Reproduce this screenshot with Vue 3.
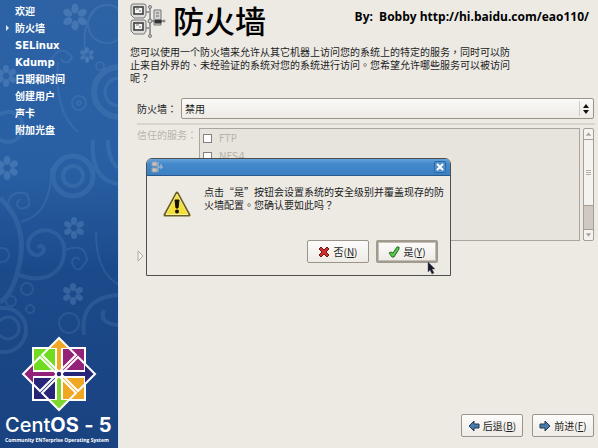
<script setup>
import { ref } from 'vue'

const steps = ['欢迎', '防火墙', 'SELinux', 'Kdump', '日期和时间', '创建用户', '声卡', '附加光盘']
const current = '防火墙'
const firewall = ref('disabled')
const services = ['FTP', 'NFS4']

const petals = [0, 60, 120, 180, 240, 300]
const flowers = [
  { x: 75, y: 17, s: 1.2 },
  { x: 87, y: 55, s: 0.7 },
  { x: 6, y: 76, s: 1 },
  { x: 7, y: 168, s: 1.1 },
  { x: 74, y: 228, s: 1 },
  { x: 73, y: 294, s: 1 },
]
const logoParts = [
  { angle: 0, arrow: '#efa724', square: '#932279' },
  { angle: 90, arrow: '#262577', square: '#efa724' },
  { angle: 180, arrow: '#80d62d', square: '#262577' },
  { angle: 270, arrow: '#932279', square: '#70dc1e' },
]
</script>

<template>
  <div class="screen">
    <aside class="sidebar">
      <svg class="pattern" viewBox="0 0 118 448" preserveAspectRatio="xMidYMin slice" aria-hidden="true">
        <g class="curl">
          <circle cx="107" cy="24" r="19" />
          <path d="M88 62Q78 30 96 8M50 62q10-20 22-5q-5 10-11 2M58 62q-4 50 20 70" />
          <circle cx="79" cy="103" r="7" />
          <circle cx="79" cy="103" r="2" />
          <circle cx="100" cy="66" r="4" />
          <circle cx="73" cy="176" r="20" stroke-width="5" />
          <circle cx="73" cy="176" r="10" stroke-width="4" />
          <circle cx="119" cy="92" r="25" stroke-width="6" />
          <circle cx="119" cy="92" r="14" stroke-width="3" />
          <path d="M118 184Q90 180 93 140M118 168q-10-8-10-28" stroke-width="4" />
          <path d="M51 168q1 46-30 54M8 203q3-14 19-9q7 16-8 14q-5-5 2-9" />
          <path d="M0 198Q30 226 18 270Q12 295 0 302" stroke-width="5" />
          <path d="M19 275C50 286 66 268 64 247C60 226 36 226 29 240C24 256 42 260 44 249Q41 243 38 248" stroke-width="4" />
          <path d="M65 250q20-8 22 10q-10 18-15 2q2-8 8-2M96 232q0 40 22 52" />
          <circle cx="2" cy="255" r="7" />
          <circle cx="27" cy="289" r="6" />
          <circle cx="11" cy="301" r="5" />
          <circle cx="30" cy="309" r="4" />
          <circle cx="4" cy="330" r="22" stroke-width="4" />
          <circle cx="8" cy="328" r="11" stroke-width="3" />
          <circle cx="69" cy="323" r="10" />
          <path d="M84 335q-5-37 34-40M118 325q-20-2-14-15" stroke-width="4" />
          <circle cx="8" cy="127" r="15" stroke-width="4" />
        </g>
        <g v-for="f in flowers" :key="f.y" class="flower" :transform="`translate(${f.x} ${f.y}) scale(${f.s})`">
          <ellipse v-for="a in petals" :key="a" cx="0" cy="-7" rx="3" ry="4" :transform="`rotate(${a})`" />
        </g>
      </svg>

      <nav>
        <ol class="steps">
          <li v-for="step in steps" :key="step" :class="{ current: step === current }">{{ step }}</li>
        </ol>
      </nav>

      <div class="brand">
        <svg class="logo" viewBox="-38 -38 76 76" aria-hidden="true">
          <g v-for="p in logoParts" :key="p.angle" :transform="`rotate(${p.angle})`" stroke="#fff" stroke-width="2">
            <rect x="3" y="-26" width="23" height="23" :fill="p.square" />
          </g>
          <g v-for="p in logoParts" :key="p.angle" :transform="`rotate(${p.angle})`">
            <path d="M0-36L10-26H-10ZM-2-26H2V-3H-2Z" :fill="p.arrow" />
            <path d="M0-36L17-19L0-2L-17-19Z" fill="none" stroke="#fff" stroke-width="2" />
          </g>
          <circle r="3" fill="#262577" stroke="#fff" stroke-width="1.5" />
        </svg>
        <div class="brand-name">Cent<b>OS</b> <b>-</b> <b>5</b></div>
        <div class="tagline">Community ENTerprise Operating System</div>
      </div>
    </aside>

    <main class="page">
      <header class="head">
        <svg class="net-icon" viewBox="0 0 36 36" aria-hidden="true">
          <g stroke="#77777a">
            <path d="M15 9h5M15 25h5M20 4v29M20 18h14" fill="none" stroke="#9b9b9b" stroke-width="2" />
            <path d="M1 3q0-2 2-2h11q2 0 2 2v9l-2 3H4l-3-3Z" fill="#dedddc" />
            <path d="M1 19q0-2 2-2h11q2 0 2 2v9l-2 3H4l-3-3Z" fill="#dedddc" />
            <path d="M4 4h9v7H4ZM4 20h9v7H4Z" fill="#f4f4f2" stroke="#333" stroke-width="1.5" />
            <path d="M6 6h3M9 8h2M6 22h3M9 24h2" stroke="#777" />
            <path d="M24 7h7v15h-7Z" fill="#d4d4d3" />
            <path d="M25 17h6v3h-6Z" fill="#333" stroke="#333" />
            <path d="M26 10h3M26 13h3" stroke="#666" />
            <g fill="#ccc"><circle cx="20" cy="4" r="1.5" /><circle cx="20" cy="18" r="2" /><circle cx="20" cy="33" r="1.5" /><circle cx="34" cy="18" r="1" /></g>
          </g>
        </svg>
        <h1>防火墙</h1>
        <p class="credit">By:&nbsp; Bobby http://hi.baidu.com/eao110/</p>
      </header>

      <p class="intro">您可以使用一个防火墙来允许从其它机器上访问您的系统上的特定的服务，同时可以防<br />止来自外界的、未经验证的系统对您的系统进行访问。您希望允许哪些服务可以被访问<br />呢？</p>

      <div class="form">
        <div class="field">
          <label for="firewall">防火墙：</label>
          <div class="combo">
            <select id="firewall" v-model="firewall">
              <option value="enabled">启用</option>
              <option value="disabled">禁用</option>
            </select>
            <svg class="combo-arrows" viewBox="0 0 6 10" aria-hidden="true"><path d="M3 0L6 4H0ZM3 10L0 6H6Z" /></svg>
          </div>
        </div>
        <hr />
        <div class="trusted">
          <span class="trusted-label" id="trusted">信任的服务：</span>
          <div class="list" role="group" aria-labelledby="trusted">
            <label v-for="s in services" :key="s"><input type="checkbox" disabled />{{ s }}</label>
          </div>
          <div class="scrollbar" aria-hidden="true">
            <svg class="step" viewBox="0 0 10 10"><path d="M5 3L8 7H2Z" /></svg>
            <div class="thumb"><i></i><i></i><i></i></div>
            <div class="trough"></div>
            <svg class="step" viewBox="0 0 10 10"><path d="M5 7L2 3H8Z" /></svg>
          </div>
        </div>
        <svg class="expander" viewBox="0 0 7 12" aria-hidden="true"><path d="M1 1L6 6L1 11Z" /></svg>
      </div>

      <footer class="actions">
        <button type="button">
          <svg viewBox="0 0 12 12" aria-hidden="true"><path d="M1 6L6 1V4H11V8H6V11Z" fill="#477cac" stroke="#23364c" /></svg>
          <span>后退(<u>B</u>)</span>
        </button>
        <button type="button">
          <svg viewBox="0 0 12 12" aria-hidden="true"><path d="M11 6L6 1V4H1V8H6V11Z" fill="#477cac" stroke="#23364c" /></svg>
          <span>前进(<u>F</u>)</span>
        </button>
      </footer>
    </main>

    <section class="dialog" role="alertdialog" aria-labelledby="question">
      <div class="titlebar">
        <svg class="mini" viewBox="0 0 13 12" aria-hidden="true"><path d="M1 1h5v4H1ZM1 7h5v4H1Z" fill="#c9c5be" stroke="#929ba8" /><path d="M7 1v10M7 6h5M10 3v5" fill="none" stroke="#b8bfc9" /></svg>
        <button type="button" class="close" aria-label="关闭">
          <svg viewBox="0 0 8 8" aria-hidden="true"><path d="M1 1L7 7M7 1L1 7" /></svg>
        </button>
      </div>
      <div class="dialog-body">
        <svg class="warning" viewBox="0 0 28 26" aria-hidden="true">
          <path d="M14 2L26 24H2Z" fill="#f2dc35" stroke="#6a5f1d" stroke-width="3" stroke-linejoin="round" />
          <path d="M14 3L25 23.500H3Z" fill="#f4de38" stroke="#fbf2a0" stroke-linejoin="round" />
          <path d="M12 9h4l-1 8h-2Z" fill="#111" stroke="#111" stroke-linejoin="round" />
          <circle cx="14" cy="20.500" r="2" fill="#111" />
        </svg>
        <p id="question">点击“是”按钮会设置系统的安全级别并覆盖现存的防<br />火墙配置。您确认要如此吗？</p>
      </div>
      <div class="dialog-actions">
        <button type="button">
          <svg viewBox="0 0 12 12" aria-hidden="true"><path d="M3 1L6 4L9 1L11 3L8 6L11 9L9 11L6 8L3 11L1 9L4 6L1 3Z" fill="#d22f2f" stroke="#6b1717" /></svg>
          <span>否(<u>N</u>)</span>
        </button>
        <button type="button" class="default">
          <svg viewBox="0 0 12 12" aria-hidden="true"><path d="M1 7L3 6L5 7L9 1L11 1L11 3L6 11L4 11Z" fill="#5fc552" stroke="#1f6e1c" /></svg>
          <span>是(<u>Y</u>)</span>
        </button>
      </div>
      <svg class="pointer" viewBox="0 0 9 14" aria-hidden="true"><path d="M1 1V11L3 9L5 13L7 12L5 8H8Z" /></svg>
    </section>
  </div>
</template>

<style>
body {
  margin: 0;
  background: #edeae4;
}
</style>

<style scoped>
* {
  box-sizing: border-box;
}

.screen {
  position: relative;
  display: flex;
  min-height: 100vh;
  overflow: hidden;
  background: #edeae4;
  color: #1c1c1c;
  font: 10px/13px "Noto Sans CJK TC", "Noto Sans CJK SC", sans-serif;
}

h1,
p,
ol {
  margin: 0;
  padding: 0;
}

svg {
  display: block;
}

.sidebar {
  position: relative;
  display: flex;
  flex: none;
  flex-direction: column;
  justify-content: space-between;
  width: 119px;
  border-right: 1px solid #dce4ec;
  background: linear-gradient(#2d63a5, #285fa3 38%, #1b4a8b 60%, #1a4280);
  color: #fff;
}

.pattern {
  position: absolute;
  inset: 0;
  width: 100%;
  height: 100%;
}

.curl {
  fill: none;
  stroke: #8fb9e4;
  stroke-width: 2;
  opacity: 0.13;
}

.flower {
  fill: #a5c8ec;
  opacity: 0.2;
}

.steps {
  position: relative;
  padding: 3px 0 0 15px;
  list-style: none;
  font: bold 10px/17px "DejaVu Sans", "Noto Sans CJK SC", sans-serif;
}

.steps .current::before {
  content: "";
  position: absolute;
  left: 6px;
  margin-top: 5px;
  border: 3px solid transparent;
  border-left-color: #dce9f6;
}

.brand {
  position: relative;
  padding: 0 5px 4px;
}

.logo {
  width: 76px;
  height: 76px;
  margin: 0 auto;
}

.brand-name {
  padding-top: 2px;
  font: 500 20px/22px Inter, sans-serif;
  white-space: nowrap;
}

.tagline {
  font: bold 5px/8px "Open Sans", sans-serif;
  white-space: nowrap;
}

.page {
  display: flex;
  flex: 1;
  flex-direction: column;
  min-width: 0;
  padding: 0 3px 11px 11px;
}

.head {
  display: flex;
  align-items: flex-start;
}

.net-icon {
  width: 36px;
  height: 36px;
  margin-top: 3px;
}

h1 {
  flex: 1;
  padding-left: 7px;
  color: #000;
  font: 500 31px/40px "Noto Sans CJK SC", sans-serif;
  white-space: nowrap;
}

.credit {
  padding: 9px 6px 0 0;
  color: #000;
  font: bold 12px/16px "Open Sans", sans-serif;
}

.intro {
  padding-top: 5px;
  white-space: nowrap;
}

.form {
  padding: 14px 0 0 7px;
}

.field {
  display: flex;
  align-items: center;
  gap: 4px;
  padding-right: 1px;
}

.field label {
  width: 40px;
}

.combo {
  position: relative;
  flex: 1;
}

select {
  display: block;
  width: 100%;
  height: 21px;
  padding: 0 20px 0 3px;
  border: 1px solid #9a948b;
  border-radius: 2px;
  appearance: none;
  background: linear-gradient(#fbfaf8, #eeebe6);
  color: #1c1c1c;
  font: inherit;
}

.combo-arrows {
  position: absolute;
  top: 6px;
  right: 5px;
  width: 6px;
  height: 10px;
  fill: #111;
  pointer-events: none;
}

.combo::after {
  content: "";
  position: absolute;
  top: 3px;
  right: 14px;
  bottom: 3px;
  border-left: 1px solid #cfcac2;
}

hr {
  height: 2px;
  margin: 4px 0 3px;
  border: 0;
  background: #d8d4cd;
}

.trusted {
  display: flex;
  gap: 3px;
  height: 113px;
  padding-right: 1px;
}

.trusted-label {
  width: 59px;
  color: #b9b4aa;
  white-space: nowrap;
}

.list {
  flex: 1;
  overflow: hidden;
  padding: 0 2px;
  border: 1px solid #aaa59d;
  background: #e7e4de;
}

.list label {
  display: flex;
  align-items: center;
  gap: 7px;
  height: 18px;
  color: #b9b4aa;
  font-family: "DejaVu Sans", sans-serif;
}

.list input {
  width: 9px;
  height: 9px;
  margin: 0 0 0 1px;
  border: 1px solid #85807a;
  appearance: none;
  background: #fff;
}

.scrollbar {
  display: flex;
  flex-direction: column;
  width: 11px;
  border: 1px solid #a49e95;
  border-radius: 2px;
  background: #f5f3f0;
}

.step {
  height: 10px;
  fill: #aaa59d;
}

.thumb {
  display: flex;
  flex: 66;
  flex-direction: column;
  align-items: center;
  justify-content: center;
  gap: 1px;
  border: solid #a49e95;
  border-width: 1px 0;
}

.thumb i {
  width: 5px;
  height: 1px;
  background: #b5afa6;
}

.trough {
  flex: 24;
  border-bottom: 1px solid #a49e95;
  background: #cfc9c1;
}

.expander {
  width: 7px;
  height: 12px;
  margin-top: 9px;
  fill: #f5f3f0;
  stroke: #b0aba2;
}

.actions,
.dialog-actions {
  display: flex;
  justify-content: flex-end;
}

.actions {
  gap: 9px;
  margin-top: auto;
  padding-right: 1px;
}

button {
  display: flex;
  align-items: center;
  justify-content: center;
  gap: 3px;
  width: 62px;
  height: 23px;
  padding: 0;
  border: 1px solid #9a948b;
  border-radius: 2px;
  background: linear-gradient(#fdfcfb, #eeebe6);
  color: #1c1c1c;
  font: inherit;
}

button svg {
  width: 12px;
  height: 12px;
}

.dialog {
  position: absolute;
  top: 158px;
  left: 146px;
  width: 305px;
  border: 1px solid #4e4e4e;
  border-radius: 6px 6px 0 0;
  background: #edeae4;
}

.titlebar {
  display: flex;
  align-items: center;
  justify-content: space-between;
  height: 17px;
  padding: 0 4px;
  border-bottom: 1px solid #28588c;
  border-radius: 5px 5px 0 0;
  background: linear-gradient(#64a3dc, #4489cb 30%, #3b80c2);
}

.mini {
  width: 13px;
  height: 12px;
}

.close {
  width: 12px;
  height: 12px;
  border-color: #2e68a4;
  background: #4f90cd;
}

.close svg {
  width: 8px;
  height: 8px;
  fill: none;
  stroke: #fff;
  stroke-width: 2;
}

.dialog-body {
  display: flex;
  gap: 13px;
  height: 64px;
  padding: 9px 0 0 16px;
  white-space: nowrap;
}

.warning {
  width: 28px;
  height: 26px;
  margin-top: 6px;
}

.dialog-actions {
  gap: 7px;
  padding: 0 12px 12px;
}

.default {
  border: 2px solid #a19b8f;
  outline: 1px solid #c4beb4;
  outline-offset: -3px;
}

.pointer {
  position: absolute;
  top: 102px;
  left: 280px;
  width: 9px;
  height: 14px;
  fill: #16182b;
  stroke: #555b6c;
  stroke-width: 0.5;
}
</style>
